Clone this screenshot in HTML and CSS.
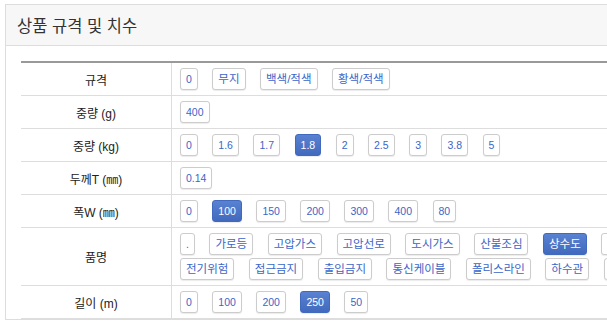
FILE: index.html
```html
<!DOCTYPE html>
<html lang="ko">
<head>
  <meta charset="UTF-8" />
  <meta name="viewport" content="width=device-width, initial-scale=1" />
  <title>상품 규격 및 치수</title>
  <link rel="stylesheet" href="styles.css">
</head>
<body>

<div class="panel">
  <div class="panel-heading">상품 규격 및 치수</div>
  <div class="panel-body">
    <div class="spec-table">
      <div class="spec-row">
        <div class="spec-label">규격</div>
        <div class="spec-values">
          <button class="opt num">0</button>
          <button class="opt">무지</button>
          <button class="opt">백색/적색</button>
          <button class="opt">황색/적색</button>
        </div>
      </div>
      <div class="spec-row">
        <div class="spec-label">중량 (g)</div>
        <div class="spec-values">
          <button class="opt num">400</button>
        </div>
      </div>
      <div class="spec-row">
        <div class="spec-label">중량 (kg)</div>
        <div class="spec-values">
          <button class="opt num">0</button>
          <button class="opt num">1.6</button>
          <button class="opt num">1.7</button>
          <button class="opt num active">1.8</button>
          <button class="opt num">2</button>
          <button class="opt num">2.5</button>
          <button class="opt num">3</button>
          <button class="opt num">3.8</button>
          <button class="opt num">5</button>
        </div>
      </div>
      <div class="spec-row">
        <div class="spec-label">두께T (㎜)</div>
        <div class="spec-values">
          <button class="opt num">0.14</button>
        </div>
      </div>
      <div class="spec-row">
        <div class="spec-label">폭W (㎜)</div>
        <div class="spec-values">
          <button class="opt num">0</button>
          <button class="opt num active">100</button>
          <button class="opt num">150</button>
          <button class="opt num">200</button>
          <button class="opt num">300</button>
          <button class="opt num">400</button>
          <button class="opt num">80</button>
        </div>
      </div>
      <div class="spec-row">
        <div class="spec-label">품명</div>
        <div class="spec-values">
          <button class="opt num">.</button>
          <button class="opt">가로등</button>
          <button class="opt">고압가스</button>
          <button class="opt">고압선로</button>
          <button class="opt">도시가스</button>
          <button class="opt">산불조심</button>
          <button class="opt active">상수도</button>
          <button class="opt">안전제일</button>
          <button class="opt">전기위험</button>
          <button class="opt">접근금지</button>
          <button class="opt">출입금지</button>
          <button class="opt">통신케이블</button>
          <button class="opt">폴리스라인</button>
          <button class="opt">하수관</button>
          <button class="opt">화기엄금</button>
        </div>
      </div>
      <div class="spec-row">
        <div class="spec-label">길이 (m)</div>
        <div class="spec-values">
          <button class="opt num">0</button>
          <button class="opt num">100</button>
          <button class="opt num">200</button>
          <button class="opt num active">250</button>
          <button class="opt num">50</button>
        </div>
      </div>
    </div>
  </div>
</div>

</body>
</html>
```

FILE: styles.css
```css
html, body {
  overflow: hidden;
}
body {
  margin: 4px 0 0 5px;
  background: #fff;
  font-family: "Liberation Sans", "Noto Sans CJK KR", sans-serif;
  color: #333;
}
.panel {
  width: 780px;
  border: 1px solid #ddd;
  background: #fff;
}
.panel-heading {
  background: #f7f7f7;
  border-bottom: 1px solid #ddd;
  height: 40px;
  line-height: 40px;
  padding: 0 11px;
  font-family: "Noto Sans CJK KR", sans-serif;
  font-size: 16.5px;
  color: #333;
}
.panel-body {
  padding: 15px 15px 0;
}
.spec-table {
  width: 680px;
  border-top: 2px solid #999;
}
.spec-row {
  display: flex;
  border-bottom: 1px solid #ddd;
}
.spec-label {
  width: 150px;
  flex: none;
  border-right: 1px solid #ddd;
  display: flex;
  align-items: center;
  justify-content: center;
  font-size: 12px;
  color: #222;
}
.spec-values {
  flex: 1;
  display: flex;
  flex-wrap: wrap;
  column-gap: 14.5px;
  row-gap: 3px;
  padding: 5px 8px;
}
.opt {
  height: 22px;
  line-height: 20px;
  padding: 0 5px;
  font-family: "Liberation Sans", "Noto Sans CJK KR", sans-serif;
  font-size: 11.5px;
  color: #3b66c8;
  background: #fff;
  border: 1px solid #ccc;
  border-radius: 3px;
  box-shadow: 0 1px 1px rgba(0,0,0,0.08);
  cursor: pointer;
}
.opt.num {
  font-size: 10.5px;
}
.opt:hover {
  border-color: #adadad;
}
.opt.active {
  color: #fff;
  background: linear-gradient(#5a82d2, #4169bd);
  border-color: #4169bd;
}
```
